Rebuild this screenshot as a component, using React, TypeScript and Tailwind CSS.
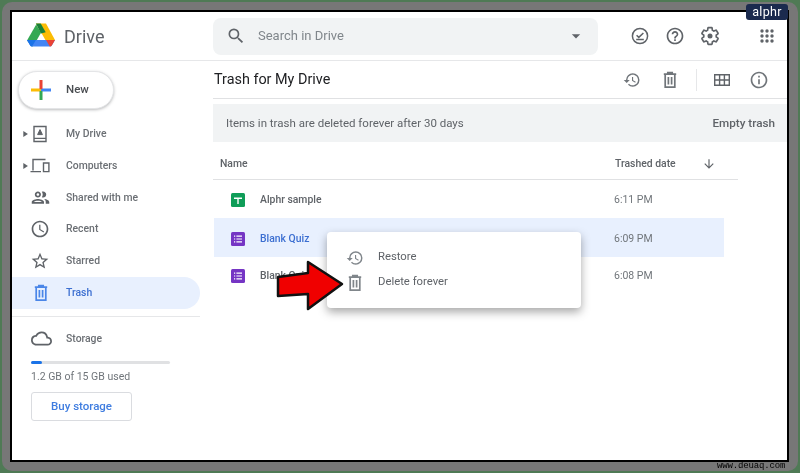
import React from "react";
import {
  MdArrowDownward,
  MdArrowDropDown,
  MdHistory,
  MdInfoOutline,
  MdOutlineAccessTime,
  MdOutlineCloud,
  MdOutlineGroup,
  MdOutlineHelpOutline,
  MdPlayArrow,
  MdSearch,
  MdStarBorder,
} from "react-icons/md";

const font = "font-['Roboto','Liberation_Sans',sans-serif]";

const DriveLogo = () => (
  <svg className="mb-[2px]" width="30" height="26" viewBox="0 0 30 26">
    <path d="M1 18.5 10.2 2.5l4.8 8.3-5 8.7-3.3 5.2z" fill="#34a853" />
    <path d="M10 1.5h10l9 16.5h-9.6L10 1.5z" fill="#fbbc04" />
    <path d="M9.9 1.6h4.8l5 8.7-4.7 1.2z" fill="#188038" />
    <path d="M1 18h28l-3.2 5.5a2 2 0 0 1-1.7 1H5.9a2 2 0 0 1-1.7-1L1 18z" fill="#4285f4" />
    <path d="M20 18h9l-3.2 5.5a2 2 0 0 1-1.7 1h-.3L20 18z" fill="#ea4335" />
    <path d="M1 18h9l-4.1 6.5a2 2 0 0 1-1.7-1L1 18z" fill="#1a73e8" />
  </svg>
);

const PlusLogo = () => (
  <svg width="20" height="20" viewBox="0 0 20 20">
    <rect x="0" y="8.5" width="10" height="3" fill="#fbbc04" />
    <rect x="10" y="8.5" width="10" height="3" fill="#4285f4" />
    <rect x="8.5" y="0" width="3" height="9" fill="#ea4335" />
    <rect x="8.5" y="11" width="3" height="9" fill="#34a853" />
  </svg>
);

const TrashIcon = ({ className }: { className: string }) => (
  <svg className={className} width="18" height="18" viewBox="0 0 18 18" fill="none" stroke="currentColor" strokeWidth="1.7">
    <path d="M2.8 3.2h12.4M6.8 3V1.6h4.4V3M4.2 3.2v13h9.6v-13M7.4 6v7.4M10.6 6v7.4" />
  </svg>
);

const MyDriveIcon = () => (
  <svg width="18" height="18" viewBox="0 0 18 18" fill="none" stroke="#5f6368" strokeWidth="1.4">
    <path d="M3 1.5h12v15H3zM3 13.4h12" />
    <path d="M9 4.6 6.6 9.6h4.8z" fill="#5f6368" strokeWidth="1" />
  </svg>
);

const ComputersIcon = () => (
  <svg width="20" height="15" viewBox="0 0 20 15" fill="none" stroke="#5f6368" strokeWidth="1.4">
    <path d="M3 12.5V1.5h12.5M.5 13.6h10.5" />
    <path d="M13.5 5h5.4v8.6h-5.4z" />
  </svg>
);

const OfflineIcon = () => (
  <svg width="20" height="20" viewBox="0 0 20 20" fill="none" stroke="#5f6368" strokeWidth="1.5">
    <circle cx="10" cy="10" r="7.6" />
    <path d="m6.6 9.2 2.2 2.2 4.6-4.4M6.2 13.6h7.6" />
  </svg>
);

const GearIcon = () => (
  <svg width="20" height="20" viewBox="0 0 24 24" fill="none" stroke="#5f6368" strokeWidth="2">
    <path d="M19.43 12.98c.04-.32.07-.64.07-.98 0-.34-.03-.66-.07-.98l2.11-1.65c.19-.15.24-.42.12-.64l-2-3.46c-.12-.22-.39-.3-.61-.22l-2.49 1c-.52-.4-1.08-.73-1.69-.98l-.38-2.65C14.46 2.18 14.25 2 14 2h-4c-.25 0-.46.18-.49.42l-.38 2.65c-.61.25-1.17.59-1.69.98l-2.49-1c-.23-.09-.49 0-.61.22l-2 3.46c-.13.22-.07.49.12.64l2.11 1.65c-.04.32-.07.65-.07.98 0 .33.03.66.07.98l-2.11 1.65c-.19.15-.24.42-.12.64l2 3.46c.12.22.39.3.61.22l2.49-1c.52.4 1.08.73 1.69.98l.38 2.65c.03.24.24.42.49.42h4c.25 0 .46-.18.49-.42l.38-2.65c.61-.25 1.17-.59 1.69-.98l2.49 1c.23.09.49 0 .61-.22l2-3.46c.12-.22.07-.49-.12-.64l-2.11-1.65z" />
    <circle cx="12" cy="12" r="3" fill="#5f6368" stroke="none" />
  </svg>
);

const AppsDots = () => (
  <svg width="14" height="14" viewBox="0 0 14 14" fill="#5f6368">
    {[2, 7, 12].map((y) =>
      [2, 7, 12].map((x) => <circle key={`${x}-${y}`} cx={x} cy={y} r="1.7" />)
    )}
  </svg>
);

const GridIcon = () => (
  <svg width="16" height="12" viewBox="0 0 16 12" fill="none" stroke="#5f6368" strokeWidth="1.4">
    <path d="M.7.7h14.6v10.6H.7zM.7 6h14.6M5.6.7v10.6M10.4.7v10.6" />
  </svg>
);

const SheetIcon = () => (
  <svg width="14" height="14" viewBox="0 0 14 14">
    <rect width="14" height="14" rx="1.5" fill="#0f9d58" />
    <path d="M3 4.4h8v1.5H7.7V11H6.3V5.9H3z" fill="#fff" />
  </svg>
);

const FormIcon = () => (
  <svg width="14" height="14" viewBox="0 0 14 14">
    <rect width="14" height="14" rx="1.5" fill="#7535c4" />
    <path d="M3 3.6h1.2v1.2H3zM5.4 3.6H11v1.2H5.4zM3 6.4h1.2v1.2H3zM5.4 6.4H11v1.2H5.4zM3 9.2h1.2v1.2H3zM5.4 9.2H11v1.2H5.4z" fill="#fff" />
  </svg>
);

const RedArrow = () => (
  <svg width="70" height="52" viewBox="0 0 70 52">
    <path d="M2 17 32 13V2L66 24 32 49V34L2 36z" fill="#f00000" stroke="#111" strokeWidth="2.5" strokeLinejoin="round" />
  </svg>
);

const navItems = [
  { label: "My Drive", icon: <MyDriveIcon />, caret: true },
  { label: "Computers", icon: <ComputersIcon />, caret: true },
  { label: "Shared with me", icon: <MdOutlineGroup size={21} color="#5f6368" /> },
  { label: "Recent", icon: <MdOutlineAccessTime size={20} color="#5f6368" /> },
  { label: "Starred", icon: <MdStarBorder size={20} color="#5f6368" /> },
];

const Row = ({ icon, name, time, className }: { icon: React.ReactNode; name: string; time: string; className: string }) => (
  <div className={`flex items-center w-[510px] pl-[17px] ${className}`}>
    {icon}
    <span className={`ml-[15px] w-[354px] text-[10.4px] font-medium ${className.includes("bg-") ? "text-[#3c6fd1]" : "text-[#5f6368]"}`}>{name}</span>
    <span className="text-[10.5px] text-[#70757a]">{time}</span>
  </div>
);

export default function App() {
  return (
    <div className={`relative w-[800px] h-[473px] overflow-hidden bg-[#4f7a55] p-[2px] blur-[0.3px] ${font}`}>
      <div className="w-full h-full rounded-[10px] bg-[#777777] pt-[8px] pl-[8px] pr-[9px] pb-[9px]">
        <div className="flex flex-col w-full h-full border-2 border-black bg-white overflow-hidden">
          <header className="flex items-center h-[49px] shrink-0 border-b border-[#e6e7e9]">
            <div className="flex items-center w-[201px] pl-[14px] gap-[8px]">
              <DriveLogo />
              <span className="text-[18px] text-[#5f6368]">Drive</span>
            </div>
            <div className="flex items-center w-[385px] h-[37px] rounded-[8px] bg-[#f1f3f4] pl-[13px] pr-[12px]">
              <MdSearch size={20} color="#5f6368" />
              <span className="ml-[12px] text-[13px] text-[#80868b]">Search in Drive</span>
              <MdArrowDropDown size={20} color="#5f6368" className="ml-auto" />
            </div>
            <div className="flex items-center ml-[32px] gap-[15px]">
              <OfflineIcon />
              <MdOutlineHelpOutline size={20} color="#5f6368" />
              <GearIcon />
            </div>
            <div className="ml-[40px]">
              <AppsDots />
            </div>
          </header>

          <div className="flex flex-1 min-h-0">
            <aside className="w-[188px] shrink-0 pt-[10px]">
              <button className="flex items-center ml-[6px] w-[96px] h-[38px] rounded-full bg-white border border-[#e4e5e7] shadow-[0_1px_3px_rgba(60,64,67,0.35)] pl-[12px]">
                <PlusLogo />
                <span className="ml-[15px] text-[11.5px] font-medium text-[#4a4d51]">New</span>
              </button>
              <nav className="mt-[9px]">
                {navItems.map((item) => (
                  <div key={item.label} className="flex items-center h-[31.8px]">
                    <div className="w-[18px] flex justify-end">
                      {item.caret && <MdPlayArrow size={10} color="#5f6368" />}
                    </div>
                    <div className="w-[22px] ml-[-1px] mr-[15px] flex justify-center">{item.icon}</div>
                    <span className="text-[10.4px] font-medium text-[#6b6f74]">{item.label}</span>
                  </div>
                ))}
                <div className="flex items-center h-[32px] rounded-r-full bg-[#e8f0fe]">
                  <TrashIcon className="ml-[20px] text-[#4a86e8]" />
                  <span className="ml-[16px] text-[10.4px] font-medium text-[#3c6fd1]">Trash</span>
                </div>
              </nav>
              <div className="mt-[7px] border-t border-[#e6e7e9] pt-[12px] pl-[19px]">
                <div className="flex items-center h-[20px]">
                  <MdOutlineCloud size={21} color="#5f6368" />
                  <span className="ml-[14px] text-[10.4px] font-medium text-[#6b6f74]">Storage</span>
                </div>
                <div className="flex mt-[12px] w-[139px] h-[3px] bg-[#e0e1e3] rounded-full">
                  <div className="w-[11px] h-full rounded-full bg-[#1a73e8]" />
                </div>
                <p className="mt-[5px] text-[10.5px] text-[#70757a]">1.2 GB of 15 GB used</p>
                <button className="mt-[7px] w-[101px] h-[29px] rounded-[3px] border border-[#dadce0] text-[11.5px] font-medium text-[#3f7de0]">
                  Buy storage
                </button>
              </div>
            </aside>

            <main className="relative flex-1 min-w-0 pl-[13px]">
              <div className="flex items-center h-[38px] border-b border-[#e0e1e3]">
                <span className="ml-[1px] text-[14.4px] text-[#202124]">Trash for My Drive</span>
                <div className="ml-auto flex items-center text-[#70757a]">
                  <MdHistory size={18} />
                  <TrashIcon className="ml-[20px]" />
                  <div className="w-px h-[22px] ml-[17px] bg-[#e6e7e9]" />
                  <div className="ml-[17px]">
                    <GridIcon />
                  </div>
                  <MdInfoOutline size={20} className="ml-[19px] mr-[18px]" />
                </div>
              </div>
              <div className="flex items-center h-[38px] mt-[5px] pt-px bg-[#f1f3f4] pl-[13px] pr-[12px] text-[11.5px] text-[#5f6368]">
                <span>Items in trash are deleted forever after 30 days</span>
                <span className="ml-auto text-[11.7px] font-medium">Empty trash</span>
              </div>
              <div className="flex items-center h-[38px] w-[525px] pt-[6px] border-b border-[#e0e1e3] pl-[7px] text-[10.4px] font-medium text-[#5f6368]">
                <span className="w-[395px]">Name</span>
                <span>Trashed date</span>
                <MdArrowDownward size={14} className="ml-[26px]" />
              </div>
              <div className="ml-px">
                <Row icon={<SheetIcon />} name="Alphr sample" time="6:11 PM" className="h-[38px] pt-[2px]" />
                <Row icon={<FormIcon />} name="Blank Quiz" time="6:09 PM" className="h-[39px] pt-[2px] bg-[#e8f0fe]" />
                <Row icon={<FormIcon />} name="Blank Quiz" time="6:08 PM" className="h-[38px]" />
              </div>

              <div className="absolute left-[127px] top-[171px] w-[254px] h-[76px] pt-[13px] rounded-[4px] bg-white shadow-[0_4px_10px_rgba(0,0,0,0.35)] text-[11.3px] text-[#5f6368]">
                <div className="flex items-center h-[25px] pl-[19px]">
                  <MdHistory size={18} color="#80868b" />
                  <span className="ml-[14px]">Restore</span>
                </div>
                <div className="flex items-center h-[25px] pl-[19px]">
                  <TrashIcon className="text-[#80868b]" />
                  <span className="ml-[14px]">Delete forever</span>
                </div>
              </div>
              <div className="absolute left-[76px] top-[199px]">
                <RedArrow />
              </div>
            </main>
          </div>
        </div>
      </div>
      <div className="absolute left-[746px] top-[4px] w-[42px] h-[16px] rounded-[3px] bg-[#1b2a4e] text-white text-[12.5px] tracking-[0.3px] leading-[15px] text-center">alphr</div>
      <div className="absolute left-[717px] top-[460px] text-[9px] leading-[12px] tracking-[-0.15px] text-black font-['Liberation_Mono',monospace]">www.deuaq.com</div>
    </div>
  );
}
